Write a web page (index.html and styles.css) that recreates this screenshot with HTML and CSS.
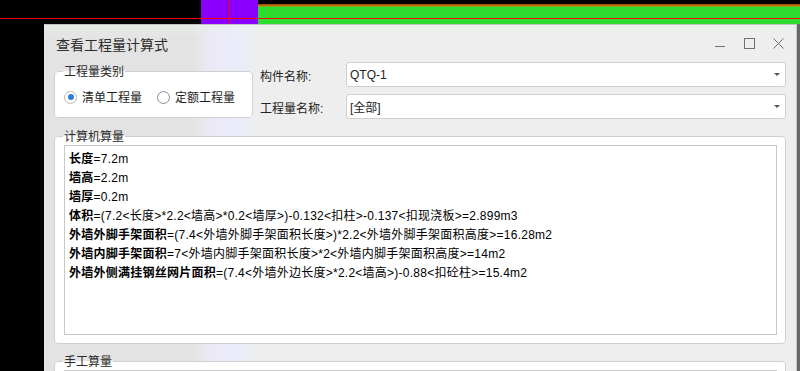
FILE: index.html
```html
<!DOCTYPE html>
<html lang="zh-CN">
  <head>
    <meta charset="UTF-8" />
    <title>查看工程量计算式</title>
    <link rel="stylesheet" href="styles.css">
  </head>
  <body>
    <div class="strip">
      <div class="blk blk-black"></div>
      <div class="blk blk-purple"></div>
      <div class="blk blk-green"></div>
      <div class="red-h"></div>
      <div class="red-v"></div>
    </div>

    <div class="stage">
      <div class="gap"></div>

      <div class="window">
        <div class="titlebar">
          <span class="title">查看工程量计算式</span>
          <div class="ctrls">
            <button class="ctl">
              <svg width="11" height="11" viewBox="0 0 11 11"><path d="M0 8.5H10"/></svg>
            </button>
            <button class="ctl">
              <svg width="11" height="11" viewBox="0 0 11 11"><rect x="0.5" y="0.5" width="10" height="10"/></svg>
            </button>
            <button class="ctl">
              <svg width="11" height="11" viewBox="0 0 11 11"><path d="M0.5 0.5L10.5 10.5M10.5 0.5L0.5 10.5"/></svg>
            </button>
          </div>
        </div>

        <div class="content">
          <div class="toprow">
            <fieldset class="group kind">
              <legend>工程量类别</legend>
              <div class="radios">
                <label class="radio"><span class="dot on"></span>清单工程量</label>
                <label class="radio"><span class="dot"></span>定额工程量</label>
              </div>
            </fieldset>

            <div class="fields">
              <div class="field">
                <span class="flabel">构件名称:</span>
                <div class="combo">QTQ-1<span class="arrow"></span></div>
              </div>
              <div class="field">
                <span class="flabel">工程量名称:</span>
                <div class="combo">[全部]<span class="arrow"></span></div>
              </div>
            </div>
          </div>

          <fieldset class="group calc">
            <legend>计算机算量</legend>
            <div class="formula">
              <div><b>长度</b>=7.2m</div>
              <div><b>墙高</b>=2.2m</div>
              <div><b>墙厚</b>=0.2m</div>
              <div><b>体积</b>=(7.2&lt;长度&gt;*2.2&lt;墙高&gt;*0.2&lt;墙厚&gt;)-0.132&lt;扣柱&gt;-0.137&lt;扣现浇板&gt;=2.899m3</div>
              <div><b>外墙外脚手架面积</b>=(7.4&lt;外墙外脚手架面积长度&gt;)*2.2&lt;外墙外脚手架面积高度&gt;=16.28m2</div>
              <div><b>外墙内脚手架面积</b>=7&lt;外墙内脚手架面积长度&gt;*2&lt;外墙内脚手架面积高度&gt;=14m2</div>
              <div><b>外墙外侧满挂钢丝网片面积</b>=(7.4&lt;外墙外边长度&gt;*2.2&lt;墙高&gt;)-0.88&lt;扣砼柱&gt;=15.4m2</div>
            </div>
          </fieldset>

          <fieldset class="group manual">
            <legend>手工算量</legend>
            <div class="formula"></div>
          </fieldset>
        </div>
      </div>

      <div class="edge"></div>
    </div>
  </body>
</html>
```

FILE: styles.css
```css
* {
  box-sizing: border-box;
}

body {
  margin: 0;
  width: 800px;
  height: 371px;
  overflow: hidden;
  background: #000;
  font-family: "Liberation Sans", "Noto Sans CJK SC", sans-serif;
  font-size: 12px;
  color: #1e1e1e;
}

/* desktop behind the dialog */
.strip {
  position: relative;
  display: flex;
  height: 24px;
}

.blk {
  height: 24px;
}

.blk-black {
  width: 201px;
  background: #000;
}

.blk-purple {
  width: 57px;
  background: #8a00ff;
}

.blk-green {
  flex: 1;
  background: linear-gradient(to bottom, #000 0, #000 4px, #8a4a00 4px, #d27a12 6px, #2ddc2f 7px, #2ddc2f 100%);
}

.red-h {
  position: absolute;
  left: 0;
  right: 0;
  top: 18px;
  height: 1px;
  background: #ff0000;
}

.red-v {
  position: absolute;
  left: 229px;
  top: 0;
  width: 1px;
  height: 24px;
  background: #ff0000;
}

.stage {
  display: flex;
  height: 347px;
  overflow: hidden;
}

.gap {
  width: 44px;
  background: #000;
}

.edge {
  width: 3px;
  background: #686868;
}

/* dialog */
.window {
  flex: 1;
  overflow: hidden;
  border-top: 1px solid #c2c2c2;
  border-right: 1px solid #c8c8c8;
  background: linear-gradient(to right, #e3e3e3 0, #e3e3e3 148px, #ebe8f4 165px, #ece9fa 180px, #eaedf8 196px, #eeeeee 216px, #eeeeee 100%);
}

.titlebar {
  display: flex;
  height: 37px;
  padding-left: 12px;
  background: linear-gradient(to bottom, rgba(232, 244, 232, 0.45) 0, rgba(238, 238, 238, 0) 14px);
}

.title {
  margin-top: 9px;
  font-family: "Noto Sans CJK SC", sans-serif;
  font-size: 14px;
  line-height: 20px;
  color: #2e2e2e;
}

.ctrls {
  display: flex;
  gap: 1px;
  margin-left: auto;
  margin-top: 13px;
  padding-right: 4px;
}

.ctl {
  display: flex;
  justify-content: center;
  width: 28px;
  height: 11px;
  padding: 0;
  border: none;
  background: none;
}

.ctl svg {
  fill: none;
  stroke: #707070;
  stroke-width: 1;
}

.content {
  padding: 0 10px 0 10px;
}

.toprow {
  display: flex;
  align-items: flex-start;
}

.group {
  margin: 0;
  padding: 0;
  border: 1px solid #d0d0d0;
  border-radius: 4px;
  background: #fff;
}

.group legend {
  margin-left: -1px;
  padding: 0 1px;
  font-family: "Noto Sans CJK SC", sans-serif;
  font-size: 12px;
  line-height: 14px;
  color: #2a2a2a;
}

.kind {
  width: 199px;
  margin-top: 2px;
  padding: 11px 0 12px 9px;
}

.radios {
  display: flex;
  gap: 15px;
  line-height: 16px;
}

.radio {
  display: flex;
  align-items: center;
  gap: 5px;
  font-family: "Noto Sans CJK SC", sans-serif;
  color: #1e1e1e;
}

.dot {
  display: flex;
  align-items: center;
  justify-content: center;
  width: 13px;
  height: 13px;
  border: 1px solid #8c8c8c;
  border-radius: 50%;
  background: #fff;
}

.dot.on {
  border-color: #b8b8b8;
}

.dot.on::after {
  content: "";
  width: 6px;
  height: 6px;
  border-radius: 50%;
  background: #2a7fd8;
}

.fields {
  flex: 1;
  margin-left: 7px;
}

.field {
  display: flex;
  align-items: center;
}

.field + .field {
  margin-top: 7px;
}

.flabel {
  width: 86px;
  padding-top: 2px;
  color: #222;
}

.combo {
  flex: 1;
  display: flex;
  align-items: center;
  height: 25px;
  padding: 0 5px 0 3px;
  border: 1px solid #cfcfcf;
  border-radius: 3px;
  background: #fff;
  color: #222;
}

.arrow {
  margin-left: auto;
  width: 0;
  height: 0;
  border-left: 3px solid transparent;
  border-right: 3px solid transparent;
  border-top: 3px solid #555;
}

.calc {
  margin-top: 10px;
  padding: 2px 8px 8px 9px;
}

.formula {
  height: 190px;
  padding: 3px 4px;
  border: 1px solid #c8c8c8;
  background: #fff;
  line-height: 17px;
  color: #000;
  letter-spacing: 0.25px;
}

.formula b {
  font-family: "Noto Sans CJK SC", sans-serif;
  font-weight: 700;
}

.manual {
  margin-top: 10px;
  padding: 2px 8px 0 9px;
}

.manual .formula {
  height: 12px;
}
```
